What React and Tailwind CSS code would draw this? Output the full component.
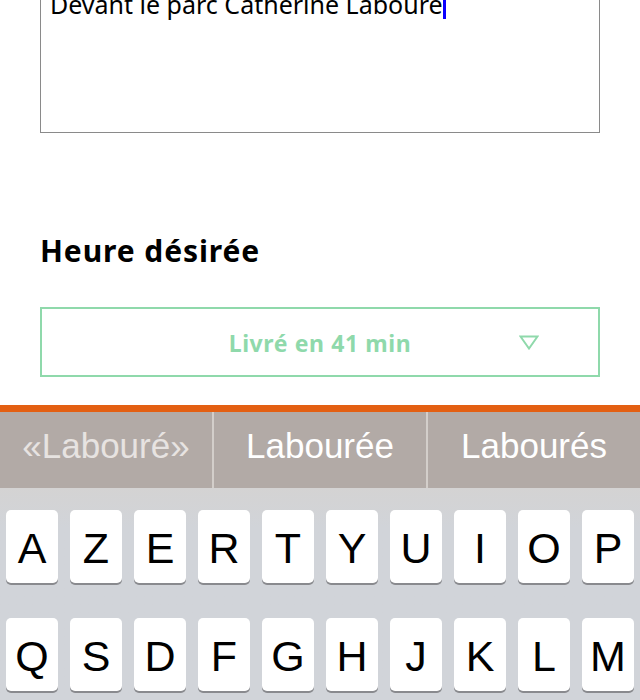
const row1 = ["A", "Z", "E", "R", "T", "Y", "U", "I", "O", "P"];
const row2 = ["Q", "S", "D", "F", "G", "H", "J", "K", "L", "M"];

function Key({ label }) {
  return (
    <div className="w-[52px] h-[73px] shrink-0 rounded-[5px] bg-white shadow-[0_2px_0_#898a8e] flex items-center justify-center pt-[4px] text-[43px] leading-none text-black font-['Liberation_Sans',Arial,sans-serif]">
      {label}
    </div>
  );
}

export default function App() {
  return (
    <div className="w-[640px] h-[700px] overflow-hidden bg-white flex flex-col font-['Noto_Sans',sans-serif]">
      <div className="px-10">
        {/* address box, scrolled partly out of view */}
        <div className="-mt-[30px] h-[163px] border border-[#8a8a8a] pl-[9px] pt-[18px]">
          <p className="text-[25px] leading-[28px] text-black whitespace-nowrap">
            Devant le parc Catherine Labouré
            <span className="inline-block w-[3px] h-[30px] bg-[#0a00ff] align-[-5px]" />
          </p>
        </div>

        <h2 className="mt-[100px] text-[30px] leading-[36px] font-bold text-black tracking-[0.9px]">
          Heure désirée
        </h2>

        <button className="mt-[38px] w-full h-[70px] border-2 border-[#8fd9ab] bg-white relative flex items-center justify-center pt-[2px]">
          <span className="text-[23px] font-bold tracking-[0.6px] text-[#8fd9ab]">Livré en 41 min</span>
          <svg
            className="absolute right-[59px] top-[26px]"
            width="20"
            height="15"
            viewBox="0 0 20 15"
            fill="none"
          >
            <path d="M1.5 1.5 H18.5 L10 13.5 Z" stroke="#8fd9ab" strokeWidth="2" strokeLinejoin="miter" />
          </svg>
        </button>
      </div>

      {/* keyboard */}
      <div className="mt-auto">
        <div className="border-t-[7px] border-[#e35f12] h-[83px] bg-[#b2aaa6] grid grid-cols-[212px_1fr_212px]">
          <div className="flex items-center justify-center pb-[7px] text-[35px] text-[#e7e3e1] font-['Liberation_Sans',Arial,sans-serif]">
            «Labouré»
          </div>
          <div className="border-l-[2px] border-r-[2px] border-[#d3ceca] flex items-center justify-center pb-[7px] text-[35px] text-white font-['Liberation_Sans',Arial,sans-serif]">
            Labourée
          </div>
          <div className="flex items-center justify-center pb-[7px] text-[35px] text-white font-['Liberation_Sans',Arial,sans-serif]">
            Labourés
          </div>
        </div>
        <div className="h-[212px] bg-gradient-to-b from-[#d4d3d3] to-[#d1d4d9] to-[40px] px-[6px] pt-[22px] flex flex-col gap-[35px]">
          <div className="flex gap-[12px]">
            {row1.map((k) => (
              <Key key={k} label={k} />
            ))}
          </div>
          <div className="flex gap-[12px]">
            {row2.map((k) => (
              <Key key={k} label={k} />
            ))}
          </div>
        </div>
      </div>
    </div>
  );
}
